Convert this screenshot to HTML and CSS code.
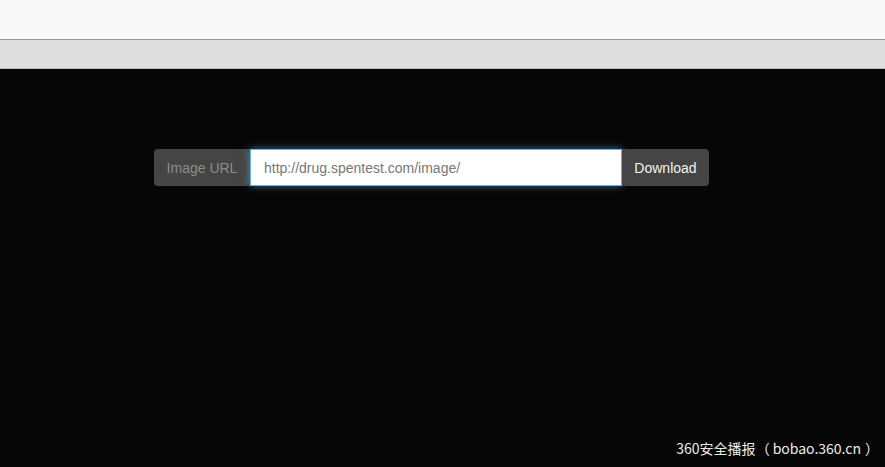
FILE: index.html
```html
<!DOCTYPE html>
<html lang="en">
<head>
    <meta charset="UTF-8">
    <meta name="viewport" content="width=device-width, initial-scale=1.0">
    <title>Image Download</title>
    <link rel="stylesheet" href="styles.css">
</head>
<body>
    <div class="browser-top"></div>
    <div class="browser-bar"></div>

    <div class="page">
        <form class="url-group" onsubmit="return false;">
            <span class="addon">Image URL</span>
            <input type="text" class="url-input" value="http://drug.spentest.com/image/" autofocus>
            <button type="submit" class="btn-download">Download</button>
        </form>
    </div>

    <div class="watermark">360安全播报<span class="paren-open">（</span>bobao.360.cn<span class="paren-close">）</span></div>
</body>
</html>
```

FILE: styles.css
```css
* {
    box-sizing: border-box;
    margin: 0;
    padding: 0;
}

html, body {
    height: 100%;
}

body {
    font-family: "Liberation Sans", Arial, sans-serif;
    font-size: 14px;
    background: #060606;
    position: relative;
    overflow: hidden;
}

.browser-top {
    height: 40px;
    background: #f8f8f8;
    border-bottom: 1px solid #999;
}

.browser-bar {
    height: 29px;
    background: #dedede;
    border-bottom: 1px solid #bbb;
}

.page {
    padding-top: 80px;
    padding-left: 154px;
}

.url-group {
    display: flex;
    height: 37px;
    width: 555px;
}

.addon {
    display: flex;
    align-items: center;
    justify-content: center;
    width: 96px;
    background: #454545;
    color: #8c8c8c;
    border-radius: 4px 0 0 4px;
}

.url-input {
    width: 372px;
    height: 37px;
    border: 1px solid #66afe9;
    padding: 0 13px;
    font-family: inherit;
    font-size: 14px;
    color: #777;
    background: #fff;
    outline: none;
    box-shadow: 0 0 8px rgba(102, 175, 233, 0.6);
    caret-color: #333;
}

.btn-download {
    width: 87px;
    border: none;
    background: #454545;
    color: #f2f2f2;
    font-family: inherit;
    font-size: 14px;
    border-radius: 0 4px 4px 0;
    cursor: pointer;
}

.watermark {
    position: absolute;
    right: 6px;
    bottom: 9px;
    color: #ececec;
    font-family: "Noto Sans CJK SC", "Liberation Sans", sans-serif;
    font-size: 14px;
}

.paren-open {
    margin-right: 3px;
}

.paren-close {
    margin-left: 4px;
}
```
